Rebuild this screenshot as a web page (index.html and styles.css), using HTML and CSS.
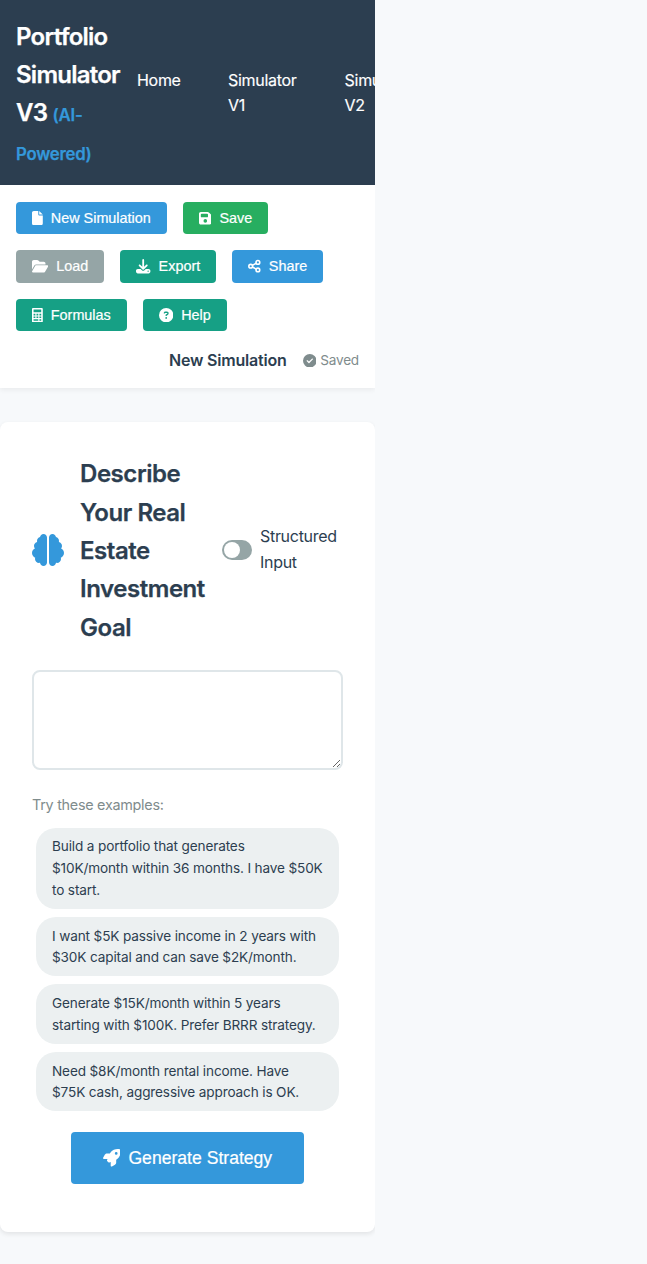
FILE: index.html
```html
<!DOCTYPE html>
<html lang="en">
<head>
<meta charset="utf-8">
<title>Portfolio Simulator V3</title>
<link rel="stylesheet" href="styles.css">
</head>
<body>
<header class="header">
  <h1 class="brand">Portfolio<br>Simulator<br>V3 <span class="tag">(AI-<br>Powered)</span></h1>
  <nav class="nav">
    <a class="home">Home</a>
    <a class="sim">Simulator V1</a>
    <a class="sim">Simulator V2</a>
    <a class="market">Market Analysis</a>
    <a class="property">Property Finder</a>
  </nav>
</header>

<section class="toolbar">
  <div class="actions">
    <button class="btn blue"><svg class="w384" viewBox="0 0 384 512"><path d="M0 64C0 28.7 28.7 0 64 0H224V128c0 17.7 14.3 32 32 32H384V448c0 35.3-28.7 64-64 64H64c-35.3 0-64-28.7-64-64V64zm384 64H256V0L384 128z"/></svg>New Simulation</button>
    <button class="btn green"><svg class="w448" viewBox="0 0 448 512"><path d="M64 32C28.7 32 0 60.7 0 96V416c0 35.3 28.7 64 64 64H384c35.3 0 64-28.7 64-64V173.3c0-17-6.7-33.3-18.7-45.3L352 50.7C340 38.7 323.7 32 306.7 32H64zm0 96c0-17.7 14.3-32 32-32H288c17.7 0 32 14.3 32 32v64c0 17.7-14.3 32-32 32H96c-17.7 0-32-14.3-32-32V128zM224 288a64 64 0 1 1 0 128 64 64 0 1 1 0-128z"/></svg>Save</button>
    <button class="btn gray"><svg class="w576" viewBox="0 0 576 512"><path d="M88.7 223.8L0 375.8V96C0 60.7 28.7 32 64 32H181.5c17 0 33.3 6.7 45.3 18.7l26.5 26.5c12 12 28.3 18.7 45.3 18.7H416c35.3 0 64 28.7 64 64v32H144c-22.8 0-43.8 12.1-55.3 31.8zm27.6 16.1C122.1 230 132.6 224 144 224H544c11.5 0 22 6.1 27.7 16.1s5.7 22.2-.1 32.1l-112 192C453.9 474 443.4 480 432 480H32c-11.5 0-22-6.1-27.7-16.1s-5.7-22.2 .1-32.1l112-192z"/></svg>Load</button>
    <button class="btn teal"><svg class="w512" viewBox="0 0 512 512"><path d="M288 32c0-17.7-14.3-32-32-32s-32 14.3-32 32V274.7l-73.4-73.4c-12.5-12.5-32.8-12.5-45.3 0s-12.5 32.8 0 45.3l128 128c12.5 12.5 32.8 12.5 45.3 0l128-128c12.5-12.5 12.5-32.8 0-45.3s-32.8-12.5-45.3 0L288 274.7V32zM64 352c-35.3 0-64 28.7-64 64v32c0 35.3 28.7 64 64 64H448c35.3 0 64-28.7 64-64V416c0-35.3-28.7-64-64-64H346.5l-45.3 45.3c-25 25-65.5 25-90.5 0L165.5 352H64zm368 56a24 24 0 1 1 0 48 24 24 0 1 1 0-48z"/></svg>Export</button>
    <button class="btn blue"><svg class="w448 line" viewBox="0 0 448 512"><circle cx="96" cy="256" r="66"/><circle cx="352" cy="122" r="66"/><circle cx="352" cy="390" r="66"/><path d="M155 225L293 153M155 287L293 359"/></svg>Share</button>
    <button class="btn teal"><svg class="w384" viewBox="0 0 384 512"><path fill-rule="evenodd" d="M32 0H352Q384 0 384 32V480Q384 512 352 512H32Q0 512 0 480V32Q0 0 32 0zM56 56V152H328V56zM56 208V264H120V208zM160 208V264H224V208zM264 208V264H328V208zM56 304V360H120V304zM160 304V360H224V304zM264 304V360H328V304zM56 400V456H224V400zM264 400V456H328V400z"/></svg>Formulas</button>
    <button class="btn teal"><svg class="w512" viewBox="0 0 512 512"><path d="M256 512A256 256 0 1 0 256 0a256 256 0 1 0 0 512zM169.800 165.300c7.900-22.300 29.100-37.300 52.800-37.300h58.300c34.900 0 63.100 28.300 63.100 63.100c0 22.600-12.100 43.500-31.700 54.800L280 264.400c-.2 13-10.900 23.600-24 23.600c-13.300 0-24-10.700-24-24V250.500c0-8.600 4.600-16.500 12.100-20.800l44.300-25.400c4.700-2.700 7.600-7.700 7.600-13.100c0-8.400-6.800-15.100-15.100-15.100H222.600c-3.400 0-6.400 2.100-7.500 5.300l-.4 1.200c-4.400 12.500-18.200 19-30.600 14.600s-19-18.200-14.600-30.600l.4-1.200zM224 352a32 32 0 1 1 64 0 32 32 0 1 1 -64 0z"/></svg>Help</button>
  </div>
  <div class="status">
    <strong class="name">New Simulation</strong>
    <span class="saved"><svg viewBox="0 0 512 512"><path d="M256 512A256 256 0 1 0 256 0a256 256 0 1 0 0 512zM369 209L241 337c-9.400 9.400-24.600 9.400-33.900 0l-64-64c-9.400-9.400-9.400-24.600 0-33.900s24.600-9.400 33.900 0l47 47L335 175c9.400-9.400 24.600-9.400 33.900 0s9.400 24.600 0 33.900z"/></svg>Saved</span>
  </div>
</section>

<main class="card">
  <div class="card-head">
    <svg class="brain" viewBox="0 0 512 512"><path d="M184 0c30.900 0 56 25.100 56 56V456c0 30.900-25.100 56-56 56c-28.900 0-52.700-21.900-55.700-50.100c-5.200 1.400-10.700 2.100-16.300 2.100c-35.300 0-64-28.700-64-64c0-7.400 1.300-14.600 3.600-21.200C21.400 367.400 0 338.200 0 304c0-31.900 18.700-59.500 45.800-72.300C37.100 220.800 32 207 32 192c0-30.700 21.600-56.300 50.400-62.600C80.800 123.900 80 118 80 112c0-29.900 20.600-55.100 48.300-62.100C131.300 21.900 155.100 0 184 0zM328 0c28.900 0 52.600 21.900 55.700 49.900c27.800 7 48.300 32.100 48.300 62.100c0 6-.8 11.900-2.400 17.400c28.800 6.200 50.400 31.900 50.400 62.600c0 15-5.100 28.800-13.800 39.700C493.300 244.500 512 272.100 512 304c0 34.200-21.400 63.400-51.600 74.800c2.300 6.600 3.600 13.800 3.600 21.200c0 35.300-28.700 64-64 64c-5.600 0-11.100-.7-16.300-2.100c-3 28.200-26.800 50.100-55.700 50.100c-30.900 0-56-25.100-56-56V56c0-30.900 25.100-56 56-56z"/></svg>
    <h2 class="title">Describe<br>Your Real<br>Estate<br>Investment<br>Goal</h2>
    <div class="toggle"><span class="switch"><span class="knob"></span></span><span class="toggle-label">Structured<br>Input</span></div>
  </div>
  <textarea class="goal"></textarea>
  <p class="hint">Try these examples:</p>
  <div class="examples">
    <div class="chip">Build a portfolio that generates<br>$10K/month within 36 months. I have $50K<br>to start.</div>
    <div class="chip">I want $5K passive income in 2 years with<br>$30K capital and can save $2K/month.</div>
    <div class="chip">Generate $15K/month within 5 years<br>starting with $100K. Prefer BRRR strategy.</div>
    <div class="chip">Need $8K/month rental income. Have<br>$75K cash, aggressive approach is OK.</div>
  </div>
  <button class="btn blue generate"><svg viewBox="0 0 512 512"><path d="M156.600 384.900L125.700 354c-8.500-8.500-11.500-20.800-7.700-32.200c3-8.900 7-20.500 11.800-33.800L24 288c-8.600 0-16.600-4.600-20.900-12.100s-4.200-16.700 .2-24.100l52.500-88.500c13-21.900 36.500-35.300 61.900-35.300l82.300 0c2.400-4 4.800-7.700 7.200-11.300C289.100-4.100 411.100-8.100 483.900 5.300c11.600 2.100 20.600 11.200 22.800 22.800c13.400 72.900 9.300 194.800-111.400 276.700c-3.500 2.400-7.300 4.800-11.300 7.200v82.300c0 25.400-13.400 49-35.300 61.900l-88.500 52.500c-7.400 4.400-16.600 4.500-24.100 .2s-12.100-12.200-12.100-20.900V380.800c-14.100 4.900-26.400 8.900-35.700 11.900c-11.200 3.600-23.400 .5-31.800-7.800zM384 168a40 40 0 1 0 0-80 40 40 0 1 0 0 80z"/></svg>Generate Strategy</button>
</main>
</body>
</html>
```
FILE: styles.css
```css
* { box-sizing: border-box; margin: 0; padding: 0; }
html { background: #f7f9fb; }
body {
  width: 375px;
  height: 1264px;
  font: 16px/1.6 Inter, "Liberation Sans", sans-serif;
  color: #2c3e50;
}
svg { fill: currentColor; flex: none; }

.header {
  display: flex;
  align-items: center;
  gap: 16px;
  height: 185.2px;
  padding: 17.4px 16px 14px;
  background: #2c3e50;
  color: #fff;
  box-shadow: 0 2px 10px rgba(0, 0, 0, .1);
}
.brand {
  flex: none;
  width: 105px;
  font-size: 24px;
  font-weight: 600;
  letter-spacing: -.75px;
  -webkit-text-stroke: .25px currentColor;
  white-space: nowrap;
}
.tag { font-size: 16.8px; color: #3498db; letter-spacing: -.25px; }
.nav {
  display: flex;
  gap: 48px;
  padding-bottom: 2px;
  letter-spacing: -.3px;
  -webkit-text-stroke: .15px currentColor;
}
.nav a { flex: none; }
.home { width: 43px; }
.sim { width: 68.6px; }
.market { width: 60px; }
.property { width: 63px; }

.toolbar {
  height: 203px;
  padding: 16.4px 16px 16px;
  background: #fff;
  box-shadow: 0 2px 5px rgba(0, 0, 0, .06);
}
.actions { display: flex; flex-wrap: wrap; gap: 16px; }
.btn {
  display: flex;
  align-items: center;
  gap: 8px;
  height: 32.5px;
  padding: 0 16px;
  border: 0;
  border-radius: 4px;
  color: #fff;
  font: 14.4px "Liberation Sans", Arial, sans-serif;
  -webkit-text-stroke: .2px currentColor;
  white-space: nowrap;
}
.btn svg { height: 14.4px; stroke-width: 0; }
.btn .w384 { width: 10.8px; }
.btn .w448 { width: 12.6px; }
.btn .w512 { width: 14.4px; }
.btn .w576 { width: 16.2px; }
.btn .line { fill: none; stroke: currentColor; stroke-width: 56; }
.blue { background: #3498db; }
.green { background: #27ae60; }
.gray { background: #95a5a6; }
.teal { background: #16a085; }

.status {
  display: flex;
  justify-content: flex-end;
  align-items: center;
  gap: 16px;
  margin-top: 16.6px;
  height: 25.6px;
}
.name { font-weight: 600; letter-spacing: -.2px; }
.saved {
  display: flex;
  align-items: center;
  gap: 4px;
  color: #7f8c8d;
  font-size: 13.6px;
  letter-spacing: -.2px;
}
.saved svg { width: 13.6px; height: 13.6px; }

.card {
  margin-top: 33.4px;
  height: 810px;
  padding: 32px;
  background: #fff;
  border-radius: 8px;
  box-shadow: 0 2px 5px rgba(0, 0, 0, .09);
}
.card-head { display: flex; align-items: center; height: 192px; }
.brain { width: 32px; height: 32px; margin-right: 16px; color: #3498db; }
.title {
  flex: none;
  width: 126px;
  margin-right: 16px;
  padding-top: 3px;
  font-size: 24px;
  font-weight: 600;
  letter-spacing: -.45px;
  -webkit-text-stroke: .25px currentColor;
  white-space: nowrap;
}
.toggle { display: flex; align-items: center; gap: 8px; letter-spacing: -.3px; }
.toggle-label { padding-top: 1px; }
.switch {
  display: flex;
  align-items: center;
  width: 30px;
  height: 20px;
  padding: 2px;
  border-radius: 10px;
  background: #95a5a6;
}
.knob { width: 16px; height: 16px; border-radius: 50%; background: #fff; }
.goal {
  display: block;
  width: 311px;
  height: 100px;
  margin-top: 24px;
  border: 2px solid #dfe6e9;
  border-radius: 8px;
  background: #fff;
  resize: vertical;
}
.hint { margin-top: 23.6px; color: #7f8c8d; font-size: 14.4px; line-height: 23px; letter-spacing: -.28px; }
.examples { display: grid; gap: 8px; margin: 11.4px 4px 0; }
.chip {
  padding: 8.8px 16px 7.2px;
  border-radius: 20px;
  background: #ecf0f1;
  font-size: 13.6px;
  line-height: 21.76px;
  letter-spacing: -.14px;
  white-space: nowrap;
}
.generate {
  height: 52px;
  margin: 20.4px auto 0;
  padding: 1px 32px 0;
  font-size: 17.6px;
}
.generate svg { width: 17.6px; height: 17.6px; }
```
